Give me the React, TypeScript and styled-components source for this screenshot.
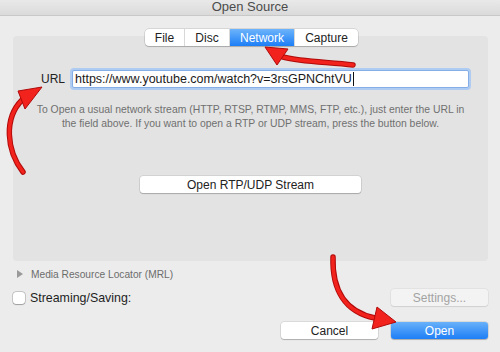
import styled, { createGlobalStyle } from 'styled-components';

const GlobalStyle = createGlobalStyle`
  html, body {
    margin: 0;
    padding: 0;
    background: #ececec;
  }
  * {
    box-sizing: border-box;
  }
`;

const tabs = ['File', 'Disc', 'Network', 'Capture'];
const tabWidths = [39, 45, 65, 64];

const App = () => {
  return (
    <Window>
      <GlobalStyle />
      <TitleBar>Open Source</TitleBar>
      <Content>
        <Panel>
          <Tabs>
            {tabs.map((t, i) => (
              <Tab key={t} $active={t === 'Network'} $w={tabWidths[i]}>
                {t}
              </Tab>
            ))}
          </Tabs>

          <UrlRow>
            <UrlLabel>URL</UrlLabel>
            <UrlField>
              https://www.youtube.com/watch?v=3rsGPNChtVU
              <Caret />
            </UrlField>
          </UrlRow>

          <Hint>
            To Open a usual network stream (HTTP, RTSP, RTMP, MMS, FTP, etc.), just enter the URL in
            <br />
            the field above. If you want to open a RTP or UDP stream, press the button below.
          </Hint>

          <StreamButton>Open RTP/UDP Stream</StreamButton>
        </Panel>

        <MrlRow>
          <Disclosure />
          <MrlText>Media Resource Locator (MRL)</MrlText>
        </MrlRow>

        <StreamRow>
          <CheckLabel>
            <Checkbox />
            Streaming/Saving:
          </CheckLabel>
          <Button $disabled>Settings...</Button>
        </StreamRow>

        <Footer>
          <Button>Cancel</Button>
          <Button $primary>Open</Button>
        </Footer>
      </Content>

      {/* red annotation arrows drawn over the dialog */}
      <Arrows viewBox='0 0 500 352' width={500} height={352}>
        <g fill='none' strokeLinecap='round'>
          <path d='M353,65 C330,62 302,62 283,57' stroke='#b00a0a' strokeWidth='5.5' />
          <path d='M353,65 C330,62 302,62 283,57' stroke='#f2231c' strokeWidth='3.5' />
          <path d='M23,172 C6,150 4,118 22,100' stroke='#b00a0a' strokeWidth='5.5' />
          <path d='M23,172 C6,150 4,118 22,100' stroke='#f2231c' strokeWidth='3.5' />
          <path d='M333,257 C332,290 345,312 375,318' stroke='#b00a0a' strokeWidth='5.5' />
          <path d='M333,257 C332,290 345,312 375,318' stroke='#f2231c' strokeWidth='3.5' />
        </g>
        <g fill='#f2231c' stroke='#b00a0a' strokeWidth='1' strokeLinejoin='round'>
          <polygon points='265,47 288,49 277,65' />
          <polygon points='42,87 18,91 25,109' />
          <polygon points='377,307 396,322 372,329' />
        </g>
      </Arrows>
    </Window>
  );
};

const Window = styled.div`
  position: relative;
  width: 500px;
  height: 352px;
  background: #ececec;
  font-family: 'Liberation Sans', Arial, sans-serif;
  color: #222;
  display: flex;
  flex-direction: column;
  overflow: hidden;
`;

const TitleBar = styled.div`
  height: 16px;
  flex-shrink: 0;
  background: linear-gradient(#e9e9e9, #dadada);
  border-bottom: 1px solid #c8c8c8;
  color: #4b4b4b;
  font-size: 13px;
  line-height: 14px;
  text-align: center;
`;

const Content = styled.div`
  flex: 1;
  display: flex;
  flex-direction: column;
  padding: 20px 12px 0 13px;
`;

const Panel = styled.div`
  height: 225px;
  background: #e3e3e3;
  border-radius: 4px;
  display: flex;
  flex-direction: column;
  align-items: center;
`;

const Tabs = styled.div`
  margin-top: -7px;
  margin-left: 2px;
  display: flex;
  height: 17px;
  background: #fff;
  border-radius: 4px;
  box-shadow: 0 0 0 0.5px rgba(0, 0, 0, 0.18), 0 1px 1px rgba(0, 0, 0, 0.18);
  overflow: hidden;
`;

const Tab = styled.div<{ $active?: boolean; $w: number }>`
  width: ${p => p.$w}px;
  display: flex;
  align-items: center;
  justify-content: center;
  font-size: 12px;
  color: ${p => (p.$active ? '#fff' : '#222')};
  background: ${p =>
    p.$active ? 'linear-gradient(#6db4fb, #1c7ef6)' : 'transparent'};
  & + & {
    border-left: 1px solid #d8d8d8;
  }
`;

const UrlRow = styled.div`
  align-self: stretch;
  display: flex;
  align-items: center;
  gap: 7px;
  margin-top: 24px;
  padding: 0 19px 0 28px;
`;

const UrlLabel = styled.span`
  font-size: 12px;
  color: #222;
`;

const UrlField = styled.div`
  flex: 1;
  height: 18px;
  display: flex;
  align-items: center;
  padding: 0 2px;
  background: #fff;
  border: 1px solid #86aee6;
  box-shadow: 0 0 0 2px #aecbf2;
  border-radius: 2px;
  font-size: 12.5px;
  color: #1a1a1a;
  white-space: nowrap;
`;

const Caret = styled.span`
  width: 1px;
  height: 14px;
  background: #111;
  margin-left: 1px;
`;

const Hint = styled.p`
  margin: 15px 0 0;
  font-size: 10.4px;
  line-height: 13.5px;
  color: #707070;
  text-align: center;
`;

const StreamButton = styled.div`
  margin-top: 46px;
  width: 221px;
  height: 17px;
  background: #fff;
  border-radius: 3px;
  box-shadow: 0 0 0 0.5px rgba(0, 0, 0, 0.15), 0 1px 1px rgba(0, 0, 0, 0.2);
  display: flex;
  align-items: center;
  justify-content: center;
  font-size: 12px;
  color: #222;
`;

const MrlRow = styled.div`
  height: 18px;
  margin-top: 4px;
  display: flex;
  align-items: center;
  gap: 8px;
  padding-left: 4px;
`;

const Disclosure = styled.span`
  width: 0;
  height: 0;
  border-top: 4px solid transparent;
  border-bottom: 4px solid transparent;
  border-left: 6px solid #9a9a9a;
`;

const MrlText = styled.span`
  font-size: 10.2px;
  color: #6c6c6c;
`;

const StreamRow = styled.div`
  margin-top: 6px;
  display: flex;
  align-items: center;
  justify-content: space-between;
`;

const CheckLabel = styled.label`
  display: flex;
  align-items: center;
  gap: 5px;
  font-size: 12.4px;
  color: #1e1e1e;
`;

const Checkbox = styled.span`
  width: 12px;
  height: 12px;
  background: #fff;
  border-radius: 3px;
  box-shadow: 0 0 0 0.5px rgba(0, 0, 0, 0.3), 0 0.5px 1px rgba(0, 0, 0, 0.2);
`;

const Button = styled.div<{ $primary?: boolean; $disabled?: boolean }>`
  width: 97px;
  height: 17px;
  border-radius: 3px;
  display: flex;
  align-items: center;
  justify-content: center;
  font-size: 12px;
  color: ${p => (p.$primary ? '#fff' : p.$disabled ? '#a3a3a3' : '#222')};
  background: ${p =>
    p.$primary
      ? 'linear-gradient(#69b1fa, #1d7ef6)'
      : p.$disabled
      ? '#f3f3f3'
      : '#fff'};
  box-shadow: ${p =>
    p.$disabled
      ? '0 0 0 0.5px rgba(0, 0, 0, 0.08), 0 1px 1px rgba(0, 0, 0, 0.08)'
      : '0 0 0 0.5px rgba(0, 0, 0, 0.15), 0 1px 1px rgba(0, 0, 0, 0.2)'};
`;

const Footer = styled.div`
  margin-top: 16px;
  display: flex;
  justify-content: flex-end;
  gap: 13px;
`;

const Arrows = styled.svg`
  position: absolute;
  left: 0;
  top: 0;
  pointer-events: none;
`;

export default App;
